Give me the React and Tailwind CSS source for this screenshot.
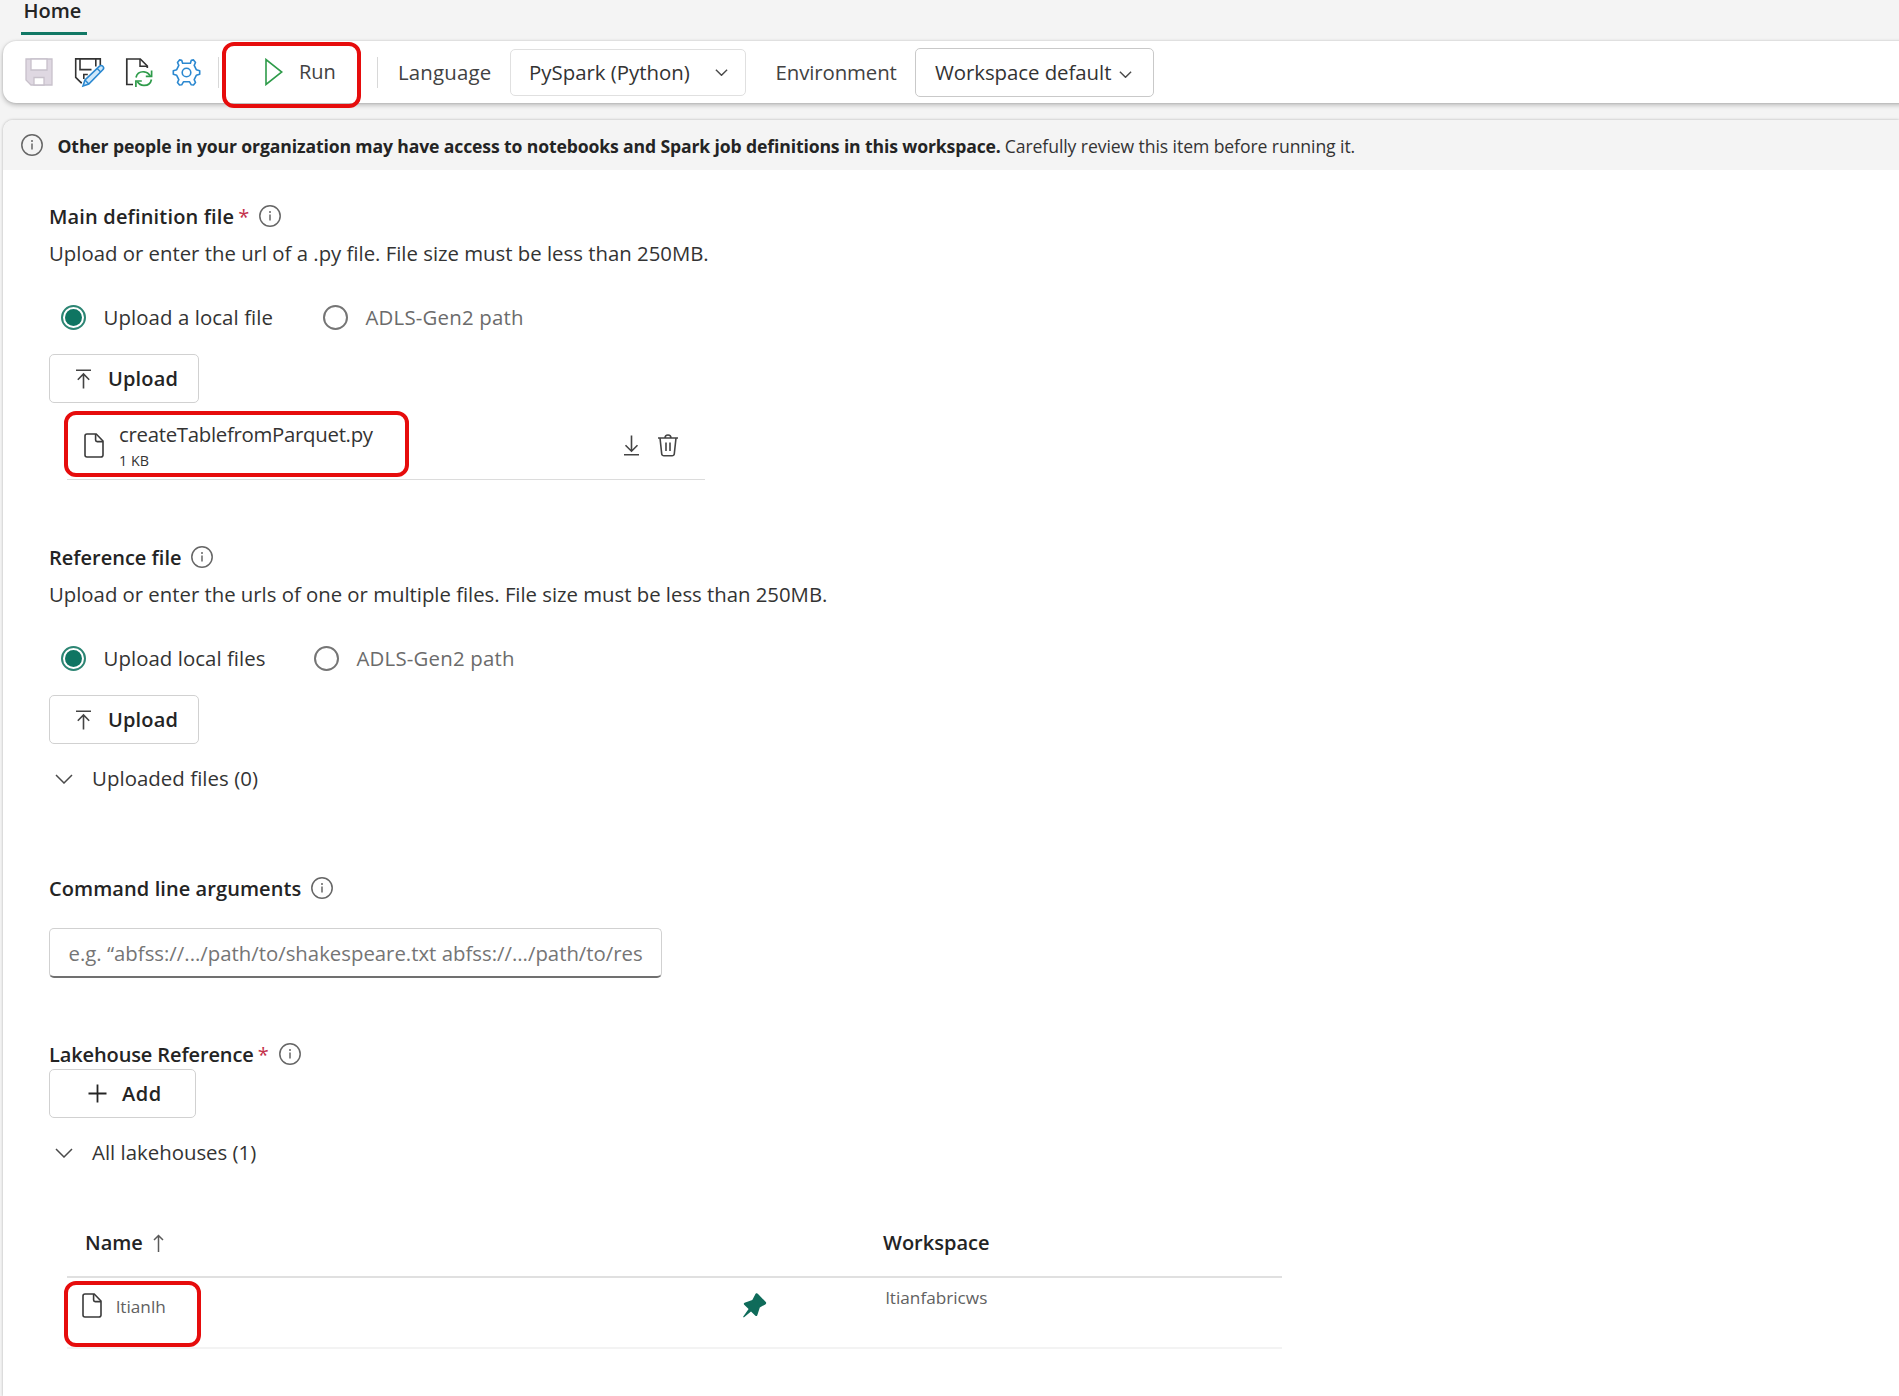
import React from "react";

const FONT = "font-['Open_Sans','Noto_Sans',sans-serif]";

function InfoIcon({ className = "" }) {
  return (
    <svg className={className} width="24" height="24" viewBox="0 0 24 24" fill="none">
      <circle cx="12" cy="12" r="10.2" stroke="#666" strokeWidth="1.500" />
      <path d="M12 10.6v6" stroke="#666" strokeWidth="1.500" />
      <circle cx="12" cy="7.9" r="1" fill="#666" />
    </svg>
  );
}

function Chevron({ w = 18, h = 10, className = "", color = "#4a4a4a" }) {
  return (
    <svg className={className} width={w} height={h} viewBox="0 0 18 10" fill="none">
      <path d="M1 1l8 8 8-8" stroke={color} strokeWidth={w < 15 ? 2 : 1.5} />
    </svg>
  );
}

function FileIcon() {
  return (
    <svg width="20" height="25" viewBox="0 0 20 25" fill="none" stroke="#3a3a3a" strokeWidth="1.6">
      <path d="M3 1h9.2L19 8v13.8A2 2 0 0 1 17 24H3a2 2 0 0 1-2-2V3a2 2 0 0 1 2-2z" />
      <path d="M11.6 1v6a1.6 1.6 0 0 0 1.6 1.6H19" />
    </svg>
  );
}

function SaveIcon() {
  return (
    <svg width="28" height="28" viewBox="0 0 28 28" fill="none" stroke="#c8c1cb" strokeWidth="1.3">
      <path d="M1 1h26v26H6l-5-5z" fill="#dfd8e2" />
      <path d="M6 1h16v11H6z" fill="#fff" />
      <path d="M9 27v-7.500h10V27z" fill="#fff" />
    </svg>
  );
}

function SaveAsIcon() {
  return (
    <svg width="31" height="31" viewBox="0 0 31 31" fill="none">
      <path d="M26.300 8V1.900H1.700v18.400l5.300 5.300h1" stroke="#333" strokeWidth="1.600" />
      <path d="M6 2v10.600h11.500M21.800 2v7.500" stroke="#333" strokeWidth="1.600" />
      <path d="M9.800 22v-4.500h4" stroke="#333" strokeWidth="1.600" />
      <path d="M9 29l2-6L25.300 9.300a2.400 2.400 0 0 1 3.500 3.500L14.800 27z" fill="#cfe8fa" stroke="#2b88d0" strokeWidth="1.600" />
      <path d="M11 23l3.800 4M23.200 11.500l3.500 3.500" stroke="#2b88d0" strokeWidth="1.400" />
    </svg>
  );
}

function RefreshFileIcon() {
  return (
    <svg width="29" height="31" viewBox="0 0 29 31" fill="none">
      <path d="M8 27.500H1.800V2h13.500l7 7v2" stroke="#333" strokeWidth="1.700" />
      <path d="M15 2v7.300h7" stroke="#333" strokeWidth="1.500" />
      <path d="M11 20.500c1-4 4-6 8-5.700 2.700.2 4.800 1.600 6.300 4.100" stroke="#2e9b4a" strokeWidth="1.700" />
      <path d="M26.600 13.500v5.900h-5.800" stroke="#2e9b4a" strokeWidth="1.700" />
      <path d="M26.500 22.500c-.9 4-3.900 6-7.700 5.900-2.800-.1-5-1.500-6.500-3.900" stroke="#2e9b4a" strokeWidth="1.700" />
      <path d="M10.900 29.900V24h5.900" stroke="#2e9b4a" strokeWidth="1.700" />
    </svg>
  );
}

function GearIcon() {
  return (
    <svg width="29" height="29" viewBox="0 0 29 29" fill="none" stroke="#2b88d0" strokeWidth="1.600" strokeLinejoin="round">
      <circle cx="14.500" cy="14.500" r="4.300" />
      <path d="M10.600 5.200 L9.700 2.200 L7.500 1.900 L5.500 4.500 L6.800 7.300 L4.700 11.700 L1.300 12.700 L1.300 16.300 L4.700 17.300 L6.800 21.700 L5.500 24.500 L7.500 27 L9.700 26.800 L11.600 23.700 H17.400 L19.300 26.800 L21.500 27 L23.500 24.500 L22.200 21.700 L24.300 17.300 L27.700 16.300 L27.700 12.700 L24.300 11.700 L22.200 7.300 L23.500 4.500 L21.500 1.900 L19.300 2.200 L18.400 5.200 z" />
    </svg>
  );
}

function Radio({ checked }) {
  return (
    <span
      className={
        "flex size-[25px] items-center justify-center rounded-full border-2 " +
        (checked ? "border-[#2c8573]" : "border-[#757575]")
      }
    >
      {checked && <span className="size-[17px] rounded-full bg-[#0f7562]" />}
    </span>
  );
}

function RadioRow({ first, firstClass, secondClass, gap }) {
  return (
    <div className={"ml-[11.5px] flex h-[25px] items-center text-[20.4px] leading-none whitespace-nowrap text-[#333] " + gap}>
      <span className="flex items-center gap-[18px]">
        <Radio checked />
        <span className={firstClass}>{first}</span>
      </span>
      <span className="flex items-center gap-[18px]">
        <Radio />
        <span className={"text-[#6b6b6b] " + secondClass}>ADLS-Gen2 path</span>
      </span>
    </div>
  );
}

function Heading({ children, className, required, gap = "gap-[9px]" }) {
  return (
    <div className={"flex h-6 items-center text-[20px] leading-none font-semibold whitespace-nowrap text-[#242424] " + gap + " " + className}>
      <span className="pt-px">
        {children}
        {required && <span className="ml-[4px] font-normal text-[#c4314b]">*</span>}
      </span>
      <InfoIcon />
    </div>
  );
}

function Button({ icon, label, className }) {
  return (
    <button
      className={
        "flex h-[49px] items-center rounded-[5px] border-[1.5px] border-[#d1d1d1] bg-white text-[20px] leading-none font-semibold text-[#242424] " +
        className
      }
    >
      {icon}
      <span className="pt-px">{label}</span>
    </button>
  );
}

function UploadButton() {
  return (
    <Button
      className="mt-6 w-[150px] gap-4 pl-[25px] tracking-[0.15px]"
      label="Upload"
      icon={
        <svg width="17" height="20" viewBox="0 0 17 20" fill="none" stroke="#444" strokeWidth="1.600">
          <path d="M1 1.200h15M8.500 19.500V5.500M2.800 10.700l5.700-5.700 5.700 5.700" />
        </svg>
      }
    />
  );
}

function Expander({ label, className }) {
  return (
    <div className="mt-[22px] ml-[6px] flex h-6 items-center gap-[19px] text-[20.4px] leading-none text-[#333]">
      <Chevron className="mt-px" />
      <span className={className}>{label}</span>
    </div>
  );
}

/* Red outline that calls attention to a control */
function Callout({ className }) {
  return <span className={"pointer-events-none absolute rounded-[12px] border-4 border-[#e60c0c] " + className} />;
}

function Toolbar() {
  return (
    <div className="relative mt-[6px] -mr-4 flex h-[62px] items-center rounded-[13px] bg-white text-[20.4px] leading-none whitespace-nowrap text-[#424242] shadow-[0_2px_5px_rgba(0,0,0,0.25),0_0_2px_rgba(0,0,0,0.15)]">
      <div className="ml-[22px] flex items-center">
        <SaveIcon />
        <span className="ml-[21px]"><SaveAsIcon /></span>
        <span className="ml-5"><RefreshFileIcon /></span>
        <span className="ml-[18px]"><GearIcon /></span>
      </div>
      <span className="ml-[17px] h-[31px] w-px bg-[#d8d8d8]" />
      <div className="ml-[46px] flex w-[74px] items-center gap-[16px]">
        <svg width="18" height="28" viewBox="0 0 18 28" fill="none" stroke="#2e9b4a" strokeWidth="1.600">
          <path d="M1 1.500v25L16.800 14z" />
        </svg>
        <span className="text-[20px]">Run</span>
      </div>
      <span className="ml-[38px] h-[31px] w-px bg-[#d8d8d8]" />
      <span className="ml-5 w-[94px] tracking-[0.2px]">Language</span>
      <div className="ml-[18px] flex h-[47px] w-[236px] items-center justify-between rounded-[5px] border-[1.5px] border-[#e0e0e0] pr-[17px] pl-[18px] text-[#333]">
        <span>PySpark (Python)</span>
        <Chevron w={13} h={7} />
      </div>
      <span className="ml-[29.500px] w-[122.500px] tracking-[-0.1px]">Environment</span>
      <div className="ml-[17px] flex h-[49px] w-[239px] items-center justify-between rounded-[5px] border-[1.5px] border-[#c9c9c9] pr-[21px] pl-[19px] text-[#333]">
        <span className="tracking-[-0.05px]">Workspace default</span>
        <Chevron w={13} h={7} className="mt-[4px]" />
      </div>
      <Callout className="top-px left-[219px] h-[66px] w-[139px]" />
    </div>
  );
}

function UploadedFile() {
  return (
    <div className="relative ml-[18px] flex h-[77px] w-[638px] items-center border-b-[1.5px] border-[#dcdcdc]">
      <div className="mt-[8px] ml-[17px]"><FileIcon /></div>
      <div className="mt-[10px] ml-[15px] flex flex-col gap-[9px] leading-none whitespace-nowrap text-[#333]">
        <span className="text-[20.4px] tracking-[-0.3px]">createTablefromParquet.py</span>
        <span className="text-[14.3px]">1 KB</span>
      </div>
      <div className="mt-[8px] mr-[27px] ml-auto flex items-center gap-[18px]">
        <svg width="17" height="21" viewBox="0 0 17 21" fill="none" stroke="#444" strokeWidth="1.600">
          <path d="M1 19.800h15M8.500 .5v15M2.500 10.200l6 6 6-6" />
        </svg>
        <svg width="20" height="23" viewBox="0 0 20 23" fill="none" stroke="#444" strokeWidth="1.600">
          <path d="M0 4h20M7 4a3 3 0 0 1 6 0M2 4l1.700 15.700A2.200 2.200 0 0 0 6 21.800h8a2.200 2.200 0 0 0 2.300-2.100L18 4M8 8.500v8.500M12 8.500v8.500" />
        </svg>
      </div>
      <Callout className="top-[8px] left-[-3px] h-[66px] w-[345px]" />
    </div>
  );
}

function LakehouseTable() {
  return (
    <div className="mt-[46px] ml-[18px] w-[1215px]">
      <div className="flex h-[68px] items-center border-b-2 border-[#e0e0e0] text-[20px] leading-none font-semibold text-[#242424]">
        <div className="ml-[18px] flex w-[798px] items-center gap-[10px]">
          <span>Name</span>
          <svg width="11" height="18" viewBox="0 0 11 18" fill="none" stroke="#5a5a5a" strokeWidth="1.500">
            <path d="M5.500 18V1.500M1 6l4.500-4.500L10 6" />
          </svg>
        </div>
        <span>Workspace</span>
      </div>
      <div className="relative flex h-[71px] items-start border-b-2 border-[#f3f3f3] text-[17.2px] leading-none text-[#616161]">
        <div className="mt-[15px] ml-[15px] flex w-[660px] items-center gap-[14px]">
          <FileIcon />
          <span className="pt-[3px]">ltianlh</span>
        </div>
        <svg className="mt-[15px] shrink-0" width="25" height="25" viewBox="0 0 25 25">
          <path d="M13.600 .8c.7-.7 1.500-.6 2.200 0l8 8.200c.7.800.5 1.900-.5 2.400l-5.500 3-2.500 7.800c-.3 1-1.200 1.100-1.900.5L9 18.600 1.800 24.500l-.7-.7L6.600 16 2.200 11.700c-.7-.7-.5-1.600.4-1.900l7.700-2.900z" fill="#0f6b5a" />
        </svg>
        <span className="mt-[11px] ml-[118.500px]">ltianfabricws</span>
        <Callout className="top-[3px] left-[-3px] h-[66px] w-[137px]" />
      </div>
    </div>
  );
}

export default function App() {
  return (
    <div className={"flex h-[1396px] w-full flex-col overflow-hidden bg-[#f4f4f4] pl-[3px] " + FONT}>
      <nav className="flex h-[35px] pl-[18px]">
        <span className="flex w-[66px] items-start border-b-[3px] border-[#117865] pl-[2.500px] text-[20px] leading-[22px] font-semibold text-[#242424]">
          Home
        </span>
      </nav>
      <Toolbar />
      <main className="mt-[17px] flex flex-1 flex-col rounded-tl-[10px] bg-white shadow-[0_0_3px_rgba(0,0,0,0.28)]">
        <div className="flex h-[50px] items-center rounded-tl-[10px] bg-[#f4f4f4] pl-[17px] text-[17.6px] leading-none whitespace-nowrap text-[#242424]">
          <InfoIcon />
          <span className="ml-[13.500px] pt-[4px] font-bold tracking-[-0.13px]">
            Other people in your organization may have access to notebooks and Spark job definitions in this workspace.
          </span>
          <span className="ml-1 pt-[4px] tracking-[-0.085px] text-[#333]">Carefully review this item before running it.</span>
        </div>
        <div className="flex flex-col pl-[46px]">
          <Heading className="mt-[34px] tracking-[0.16px]" required>Main definition file</Heading>
          <p className="mt-[13px] h-6 text-[20.35px] leading-6 text-[#333]">
            Upload or enter the url of a .py file. File size must be less than 250MB.
          </p>
          <div className="h-10" />
          <RadioRow first="Upload a local file" firstClass="w-[178px] tracking-[0.08px]" secondClass="tracking-[0.2px]" gap="gap-[41px]" />
          <UploadButton />
          <UploadedFile />

          <Heading className="mt-[65px]">Reference file</Heading>
          <p className="mt-[13px] h-6 text-[20.35px] leading-6 tracking-[-0.015px] text-[#333]">
            Upload or enter the urls of one or multiple files. File size must be less than 250MB.
          </p>
          <div className="h-10" />
          <RadioRow first="Upload local files" firstClass="w-[170px] tracking-[0.05px]" secondClass="tracking-[0.2px]" gap="gap-10" />
          <UploadButton />
          <Expander label="Uploaded files (0)" className="tracking-[0.05px]" />

          <Heading className="mt-[86px] tracking-[0.08px]">Command line arguments</Heading>
          <input
            className="mt-7 h-[50px] w-[613px] rounded-[5px] border-[1.5px] border-[#d1d1d1] border-b-2 border-b-[#707070] bg-white pl-[18.500px] text-[20.35px] text-[#333] placeholder:text-[#757575]"
            placeholder="e.g. “abfss://.../path/to/shakespeare.txt abfss://.../path/to/res"
          />

          <Heading className="mt-16 tracking-[-0.12px]" required>Lakehouse Reference</Heading>
          <Button
            className="mt-[3px] w-[147px] gap-[15px] pl-[38px] tracking-[0.5px]"
            label="Add"
            icon={
              <svg width="19" height="19" viewBox="0 0 19 19" stroke="#242424" strokeWidth="1.800">
                <path d="M9.500 .5v18M.5 9.500h18" />
              </svg>
            }
          />
          <Expander label="All lakehouses (1)" />
          <LakehouseTable />
        </div>
      </main>
    </div>
  );
}
